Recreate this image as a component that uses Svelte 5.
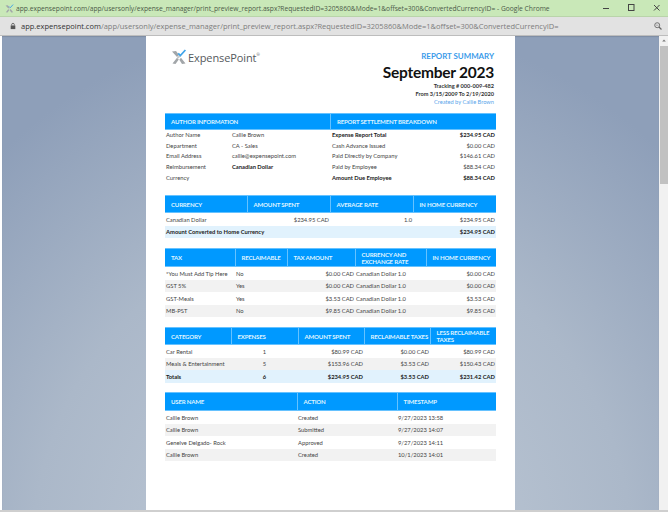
<script>
  const url = 'app.expensepoint.com/app/usersonly/expense_manager/print_preview_report.aspx?RequestedID=3205860&Mode=1&offset=300&ConvertedCurrencyID=';

  const currency = {
    widths: [82, 83, 83, 83],
    head: ['Currency', 'Amount Spent', 'Average Rate', 'In Home Currency'],
    align: ['l', 'r', 'r', 'r'],
    rows: [['Canadian Dollar', '$234.95 CAD', '1.0', '$234.95 CAD']]
  };
  const tax = {
    widths: [70, 52, 68, 71, 70],
    head: ['Tax', 'Reclaimable', 'Tax Amount', 'Currency and Exchange Rate', 'In Home Currency'],
    align: ['l', 'l', 'r', 'l', 'r'],
    rows: [
      ['*You Must Add Tip Here', 'No', '$0.00 CAD', 'Canadian Dollar 1.0', '$0.00 CAD'],
      ['GST 5%', 'Yes', '$0.00 CAD', 'Canadian Dollar 1.0', '$0.00 CAD'],
      ['GST-Meals', 'Yes', '$3.53 CAD', 'Canadian Dollar 1.0', '$3.53 CAD'],
      ['MB-PST', 'No', '$9.85 CAD', 'Canadian Dollar 1.0', '$9.85 CAD']
    ]
  };
  const category = {
    widths: [66, 67, 66, 66, 66],
    head: ['Category', 'Expenses', 'Amount Spent', 'Reclaimable Taxes', 'Less Reclaimable Taxes'],
    align: ['l', 'c', 'r', 'r', 'r'],
    rows: [
      ['Car Rental', '1', '$80.99 CAD', '$0.00 CAD', '$80.99 CAD'],
      ['Meals & Entertainment', '5', '$153.96 CAD', '$3.53 CAD', '$150.43 CAD']
    ],
    total: ['Totals', '6', '$234.95 CAD', '$3.53 CAD', '$231.42 CAD']
  };
  const users = {
    widths: [132, 100, 99],
    head: ['User Name', 'Action', 'Timestamp'],
    align: ['l', 'l', 'l'],
    rows: [
      ['Callie Brown', 'Created', '9/27/2023 13:58'],
      ['Callie Brown', 'Submitted', '9/27/2023 14:07'],
      ['Genelve Delgado- Rock', 'Approved', '9/27/2023 14:11'],
      ['Callie Brown', 'Created', '10/1/2023 14:01']
    ]
  };
  const author = [
    ['Author Name', 'Callie Brown', false],
    ['Department', 'CA - Sales', false],
    ['Email Address', 'callie@expensepoint.com', false],
    ['Reimbursement Currency', 'Canadian Dollar', true]
  ];
  const settlement = [
    ['Expense Report Total', '$234.95 CAD', true],
    ['Cash Advance Issued', '$0.00 CAD', false],
    ['Paid Directly by Company', '$146.61 CAD', false],
    ['Paid by Employee', '$88.34 CAD', false],
    ['Amount Due Employee', '$88.34 CAD', true]
  ];
</script>

{#snippet mark(size)}
  <svg width={size} height={size} viewBox="0 0 16 16" aria-hidden="true">
    <path d="M1 2.5 L5 2 L8 6 L6 8 Z M1.5 14.5 L6 8.8 L7.8 10.6 L4.5 15 Z M14.5 14.5 L11 15 L8.3 10.8 L10 8.8 Z" fill="#a2a6a9" />
    <path d="M6.4 9.2 L9.6 6.4" stroke="#c4c7c9" stroke-width="1.6" />
    <path d="M7.2 4.4 L9.4 6.6 L14.4 1" fill="none" stroke="#3fa4ea" stroke-width="1.7" />
  </svg>
{/snippet}

{#snippet dataTable(t, tall)}
  <table class="data">
    <colgroup>
      {#each t.widths as w}<col style="width: {w}px" />{/each}
    </colgroup>
    <thead>
      <tr class:tall>
        {#each t.head as h}<th>{h}</th>{/each}
      </tr>
    </thead>
    <tbody>
      {#each t.rows as row}
        <tr>
          {#each row as cell, i}<td class={t.align[i]}>{cell}</td>{/each}
        </tr>
      {/each}
      {#if t.total}
        <tr class="total">
          {#each t.total as cell, i}<td class={t.align[i]}>{cell}</td>{/each}
        </tr>
      {/if}
    </tbody>
  </table>
{/snippet}

<div class="window">
  <div class="titlebar">
    <span class="favicon">{@render mark(9)}</span>
    <span class="title">{url} - Google Chrome</span>
    <svg class="controls" width="60" height="12" viewBox="0 0 60 12" aria-hidden="true">
      <path d="M1 6.5 H7" stroke="#444" stroke-width="1" />
      <rect x="26.5" y="2.5" width="5.5" height="6" fill="none" stroke="#444" />
      <path d="M52 3 L57.5 8.5 M57.5 3 L52 8.5" stroke="#444" stroke-width="1" />
    </svg>
  </div>

  <div class="addressbar">
    <svg class="lock" width="6" height="8" viewBox="0 0 7 8" aria-hidden="true">
      <rect x="0.8" y="3.4" width="5.4" height="4.2" fill="#555" />
      <path d="M2 3.5 V2.2 C2 0.4 5 0.4 5 2.2 V3.5" fill="none" stroke="#555" />
    </svg>
    <span class="url"><b>app.expensepoint.com</b>{url.slice(20)}</span>
    <svg class="zoomglass" width="8" height="8" viewBox="0 0 9 9" aria-hidden="true">
      <circle cx="3.6" cy="3.6" r="2.8" fill="none" stroke="#666" />
      <path d="M5.6 5.6 L8.4 8.4" stroke="#666" stroke-width="1.3" />
      <path d="M2.2 3.6 H5" stroke="#888" stroke-width=".7" />
    </svg>
  </div>

  <div class="viewport">
    <div class="stage">
      <div class="page">
        <header class="report-head">
          <div class="logo">
            {@render mark(16)}
            <span class="wordmark">ExpensePoint<sup>®</sup></span>
          </div>
          <div class="summary">
            <div class="kicker">REPORT SUMMARY</div>
            <div class="month">September 2023</div>
            <div class="meta">Tracking # 000-009-482</div>
            <div class="meta">From 3/15/2009 To 2/19/2020</div>
            <div class="created">Created by Callie Brown</div>
          </div>
        </header>

        <section class="info">
          <div class="info-col left">
            <div class="info-head">Author Information</div>
            {#each author as [label, value, strong]}
              <div class="info-row">
                <span class="label">{label}</span>
                <span class:strong>{value}</span>
              </div>
            {/each}
          </div>
          <div class="info-col right">
            <div class="info-head">Report Settlement Breakdown</div>
            {#each settlement as [label, value, strong]}
              <div class="info-row" class:strong>
                <span>{label}</span>
                <span>{value}</span>
              </div>
            {/each}
          </div>
        </section>

        <section class="block currency">
          <table class="data">
            <colgroup>
              {#each currency.widths as w}<col style="width: {w}px" />{/each}
            </colgroup>
            <thead>
              <tr>{#each currency.head as h}<th>{h}</th>{/each}</tr>
            </thead>
            <tbody>
              {#each currency.rows as row}
                <tr>
                  {#each row as cell, i}<td class={currency.align[i]}>{cell}</td>{/each}
                </tr>
              {/each}
              <tr class="total">
                <td colspan="3">Amount Converted to Home Currency</td>
                <td class="r">$234.95 CAD</td>
              </tr>
            </tbody>
          </table>
        </section>

        <section class="block tax">{@render dataTable(tax, true)}</section>
        <section class="block category">{@render dataTable(category, false)}</section>
        <section class="block users">{@render dataTable(users, true)}</section>
      </div>
    </div>
    <div class="scrollbar">
      <svg class="arrow" width="8" height="9" viewBox="0 0 8 9" aria-hidden="true">
        <path d="M2.2 5.4 L4 3.4 L5.8 5.4 Z" fill="#777" />
      </svg>
      <div class="thumb"></div>
    </div>
  </div>
</div>

<style>
  :global(body) {
    margin: 0;
    background: #fff;
    overflow: hidden;
  }
  .window {
    width: 668px;
    height: 512px;
    box-sizing: border-box;
    display: flex;
    flex-direction: column;
    overflow: hidden;
    border-bottom: 2px solid #cfcfcf;
    font-family: Lato, "Open Sans", sans-serif;
    color: #444;
  }

  /* ---------- browser chrome ---------- */
  .titlebar {
    height: 16px;
    flex: none;
    display: flex;
    align-items: center;
    padding-left: 5px;
    background: #c9e8b8;
    border-bottom: 1px solid #b9d4aa;
    font-family: "Open Sans", sans-serif;
    font-size: 6.7px;
    color: #4b5a48;
    white-space: nowrap;
  }
  .favicon {
    display: flex;
    margin-right: 2px;
  }
  .title {
    flex: 1;
    min-width: 0;
    overflow: hidden;
  }
  .controls {
    flex: none;
    margin-right: 6px;
  }
  .addressbar {
    height: 18px;
    flex: none;
    display: flex;
    align-items: center;
    padding: 0 6px 0 10px;
    background: #e2e2e2;
    border-bottom: 1px solid #bdbdbd;
    font-family: "Open Sans", sans-serif;
    font-size: 7.5px;
    color: #7d7d7d;
    white-space: nowrap;
  }
  .url {
    flex: 1;
    margin-left: 5px;
  }
  .url b {
    font-weight: 400;
    color: #333;
  }

  .viewport {
    flex: 1;
    min-height: 0;
    display: flex;
    padding-left: 2px;
  }
  .stage {
    flex: 1;
    min-width: 0;
    display: flex;
    justify-content: center;
    background: radial-gradient(ellipse 500px 540px at 330px 520px, #c2ccd8 0%, #abb8c9 60%, #8e9fb9 100%);
    box-shadow: inset 0 1px 1px rgba(0, 0, 0, 0.12);
    overflow: hidden;
  }
  .scrollbar {
    width: 9px;
    flex: none;
    background: #f1f1f1;
    display: flex;
    flex-direction: column;
    align-items: flex-end;
  }
  .arrow { flex: none; }
  .thumb {
    width: 8px;
    height: 138px;
    margin-top: 1px;
    background: #c1c1c1;
  }

  /* ---------- report page ---------- */
  .page {
    width: 369px;
    flex: none;
    box-sizing: border-box;
    padding: 0 19px;
    background: #fff;
  }
  .report-head {
    height: 77px;
    box-sizing: border-box;
    display: flex;
    justify-content: space-between;
    align-items: flex-start;
    padding: 13px 2px 0 6px;
  }
  .logo {
    display: flex;
    align-items: center;
    gap: 1px;
  }
  .wordmark {
    font-family: "Open Sans", sans-serif;
    font-size: 11px;
    color: #55595c;
    letter-spacing: -0.1px;
  }
  .wordmark sup {
    font-size: 4px;
    vertical-align: 6px;
    line-height: 0;
  }
  .summary {
    text-align: right;
  }
  .kicker {
    color: #3a9bea;
    font-weight: 700;
    font-size: 7.9px;
    line-height: 10px;
    margin-top: 2px;
  }
  .month {
    color: #111;
    font-weight: 700;
    font-size: 15.5px;
    letter-spacing: -0.25px;
    line-height: 20px;
    margin-top: 1px;
  }
  .meta {
    color: #333;
    font-weight: 700;
    font-size: 5.6px;
    line-height: 8px;
  }
  .created {
    color: #5aa5ea;
    font-size: 5.7px;
    line-height: 7px;
  }

  .info {
    display: grid;
    grid-template-columns: 165px 166px;
    font-size: 5.8px;
    color: #444;
  }
  .info-head {
    height: 17px;
    box-sizing: border-box;
    line-height: 15px;
    padding-left: 6px;
    background: #0099ff;
    border: solid #66c2ff;
    border-width: 1px 0;
    color: #dff3ff;
    font-weight: 700;
    font-size: 6.1px;
    letter-spacing: -0.2px;
    text-transform: uppercase;
  }
  .right .info-head {
    border-left: 1px solid #66c2ff;
  }
  .info-row {
    display: flex;
    line-height: 10.7px;
  }
  .left .info-row {
    padding-left: 1px;
  }
  .left .label {
    width: 60px;
    margin-right: 6px;
    flex: none;
  }
  .right .info-row {
    padding: 0 1px 0 2px;
    justify-content: space-between;
  }
  .strong {
    font-weight: 700;
    color: #222;
  }

  .block {
    width: 331px;
  }
  .currency { margin-top: 11.5px; }
  .tax { margin-top: 10px; }
  .category { margin-top: 10px; }
  .users { margin-top: 9.5px; }

  .data {
    width: 100%;
    table-layout: fixed;
    border-collapse: collapse;
    font-size: 5.8px;
    color: #444;
  }
  .data th {
    height: 17px;
    box-sizing: border-box;
    padding: 0 1px 0 6px;
    background: #0099ff;
    border: 1px solid #66c2ff;
    border-width: 1px 1px 1px 0;
    color: #dff3ff;
    font-weight: 700;
    font-size: 6.1px;
    letter-spacing: -0.2px;
    line-height: 7px;
    text-align: left;
    text-transform: uppercase;
  }
  .data th:last-child { border-right: 0; }
  .data tr.tall th { height: 18px; }
  .data td {
    height: 12.5px;
    padding: 0 1px;
    white-space: nowrap;
    overflow: hidden;
  }
  .data tbody tr:nth-child(even) td { background: #f2f2f2; }
  .data tbody tr.total td {
    background: #e1f2fd;
    font-weight: 700;
    color: #222;
  }
  .r { text-align: right; }
  .c { text-align: center; }
  .l { text-align: left; }
</style>
